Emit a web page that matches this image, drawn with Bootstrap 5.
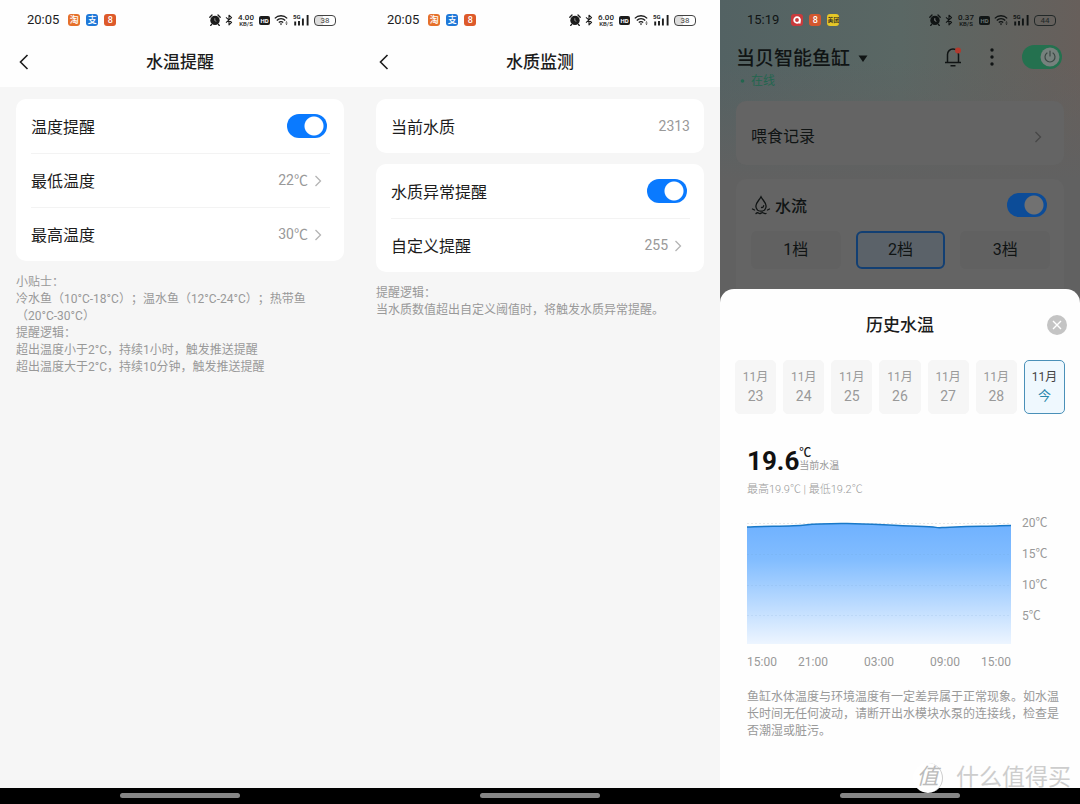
<!DOCTYPE html>
<html lang="zh-CN">
<head>
<meta charset="utf-8">
<meta name="viewport" content="width=device-width, initial-scale=1">
<title>当贝智能鱼缸</title>
<link href="https://cdn.jsdelivr.net/npm/bootstrap@5.3.0/dist/css/bootstrap.min.css" rel="stylesheet">
<style>
  body { font-family: Roboto, "Noto Sans CJK SC", sans-serif; background: #000; color: #1c1c1c; text-spacing-trim: space-all; }
  .phone { background: #f6f6f6; min-height: 100vh; }
  .phone-title { font-size: 17px; line-height: 24px; font-weight: 500; margin: 0; }

  /* status bar */
  .status { height: 40px; padding: 0 24px 0 27px; }
  .apps { gap: 6px; }
  .clock { font-size: 13px; line-height: 16px; margin-right: 3px; }
  .app-dot { width: 12px; height: 12px; border-radius: 3px; font-size: 9px; line-height: 12px; color: #fff; text-align: center; font-weight: 500; overflow: hidden; }
  .rate { font-size: 8px; line-height: 7px; width: 18px; text-align: center; font-weight: 500; }
  .rate small { display: block; font-size: 6px; line-height: 6px; }
  .hd { width: 11px; height: 9px; border-radius: 2px; background: #1c1c1c; color: #fff; font-size: 6px; line-height: 9px; text-align: center; font-weight: 700; }
  .batt { width: 22px; height: 11px; border: 1px solid #444; border-radius: 4px; font-size: 8px; line-height: 9px; text-align: center; color: #444; background: linear-gradient(90deg, #ddd 38%, transparent 38%); }

  /* settings pages */
  .top-bar { background: #fefefe; }
  .nav-row { height: 47px; padding-bottom: 4px; display: grid; grid-template-columns: 48px 1fr 48px; align-items: center; text-align: center; }
  .icon-btn { border: 0; background: none; padding: 0; line-height: 0; color: inherit; }
  .page-body { padding: 12px 16px; }
  .panel { border: 0; border-radius: 10px; background: #fff; padding: 0 14px 0 15px; }
  .panel + .panel { margin-top: 11px; }
  .item { height: 54px; font-size: 16px; color: inherit; text-decoration: none; }
  .item + .item { border-top: 1px solid #f3f3f3; }
  .item-label { padding-top: 3px; }
  .val { font-size: 14px; color: #999; }
  .val svg { color: #b4b4b4; }
  .hint { font-size: 12px; line-height: 17px; color: #999; margin: 13px 0 0; }

  .toggle.form-check-input { width: 40px; height: 24px; margin: 0 3px 0 0; border: 0; border-radius: 12px; float: none;
    background: #0a7aff radial-gradient(circle at 27px 12px, #fff 9px, transparent 10px); flex: none; }

  /* dimmed device page */
  .dimmed { color: #101414; background: linear-gradient(180deg, transparent 60px, #616161 180px), linear-gradient(90deg, #536263 0%, #5a6764 50%, #675f5b 100%); padding-bottom: 14px; }
  .device-row { height: 34px; padding: 0 18px 0 16px; }
  .device-name { font-size: 19px; font-weight: 500; border: 0; background: none; padding: 4px 0 0; color: inherit; line-height: 24px; }
  .online { font-size: 12px; line-height: 14px; padding-left: 20px; margin-bottom: 13px; color: #23664f; }
  .dimmed .panel { margin: 0 16px; background: #646464; }
  .dimmed .panel + .panel { margin-top: 14px; border-radius: 10px 10px 0 0; padding-bottom: 20px; }
  .dimmed .feed { height: 64px; padding-bottom: 0; }
  .dimmed .feed + .panel .item { height: 52px; }
  .feed svg { color: #474747; }
  .dimmed .toggle { background: #0c4c98 radial-gradient(circle at 27px 12px, #717171 9px, transparent 10px); }
  .dimmed .hd { background: #111616; color: #6a7473; }
  .dimmed .batt { background: none; border-color: #222828; color: #222828; }
  .dimmed .clock { margin-right: 6px; }
  .power { width: 40px; height: 24px; border: 0; border-radius: 12px; padding: 0 2px; background: #24714f; line-height: 0; text-align: right; color: #3c4945; }
  .level { display: grid; grid-template-columns: repeat(3, 1fr); gap: 15px; }
  .level button { height: 38px; border: 2px solid transparent; border-radius: 6px; background: #616161; font-size: 16px; line-height: 20px; color: inherit; padding: 0; }
  .level .on { border-color: #123f73; background: #5b6269; }

  /* history sheet */
  .sheet { background: #fefefe; border-radius: 14px 14px 0 0; margin-top: -14px; z-index: 1; }
  .sheet-head { height: 71px; display: grid; grid-template-columns: 48px 1fr 48px; align-items: center; text-align: center; }
  .close-box { padding-right: 13px; }
  .close-x { width: 20px; height: 20px; border-radius: 50%; background: #c4c4c4; border: 0; padding: 0; line-height: 0; color: #fff; }
  .dates { display: grid; grid-template-columns: repeat(7, 1fr); gap: 7px; padding: 0 15px; }
  .dates button { height: 54px; border: 1px solid #f6f6f6; border-radius: 5px; background: #f6f6f6; color: #999; font-size: 12px; line-height: 18px; padding: 0; }
  .dates b { display: block; font-size: 14px; line-height: 20px; font-weight: 400; }
  .dates .on { background: #eff8fe; border-color: #4a90b8; color: #444; }
  .dates .on b { color: #2a87ad; font-size: 13px; }
  .reading { margin-top: 28px; height: 38px; }
  .big-num { font-size: 26px; line-height: 38px; font-weight: 700; color: #111; }
  .unit { font-size: 12px; line-height: 14px; font-weight: 500; }
  .cur { font-size: 10px; line-height: 12px; color: #999; }
  .range { font-size: 11px; line-height: 20px; color: #999; font-weight: 300; }
  .sheet-body { padding: 0 16px 0 27px; }
  .plot { height: 137px; flex: 1 1 0; min-width: 0; }
  .y-axis { width: 42px; margin-left: 11px; font-size: 12px; line-height: 31px; color: #999; }
  .x-axis { display: grid; grid-template-columns: repeat(8, 1fr); margin: 9px 53px 0 0; font-size: 12px; line-height: 17px; color: #999; text-align: center; white-space: nowrap; }
  .x-axis .mid { grid-column: span 2; }
  .x-axis .start { justify-self: start; }
  .x-axis .end { justify-self: end; }
  .sheet .hint { margin-top: 18px; }

  .home-bar { height: 16px; background: #000; padding-top: 5px; }
  .home-bar div { width: 120px; height: 5px; border-radius: 3px; background: #868686; margin: 0 auto; }
  .brand { right: 9px; bottom: 11px; z-index: 2; color: #cdcdcd; font-size: 23px; line-height: 30px; white-space: nowrap; }
  .brand-dot { width: 30px; height: 30px; border-radius: 50%; background: #fff; border-right: 1px solid #ccc; font-size: 22px; line-height: 28px; text-align: center; font-style: italic; color: #bbb; margin-right: 13px; }
</style>
</head>
<body>
<svg class="d-none" xmlns="http://www.w3.org/2000/svg">
  <symbol id="alarm" viewBox="0 0 12 12"><circle cx="6" cy="6.4" r="4.7" fill="currentColor"/><path d="M.8 3.2 3 1M11.2 3.2 9 1M2.6 10.4l-.9 1.1M9.4 10.4l.9 1.1" stroke="currentColor" stroke-width="1.3" stroke-linecap="round"/><path d="M5.800 4.200v2.400l1.500.8" stroke="#fff" stroke-opacity=".6" fill="none" stroke-width=".8"/></symbol>
  <symbol id="bt" viewBox="0 0 8 12"><path d="M1 3.4 6.6 8.3 4 10.8V1.2l2.6 2.5L1 8.6" fill="none" stroke="currentColor" stroke-width="1.1" stroke-linejoin="round"/></symbol>
  <symbol id="wifi" viewBox="0 0 15 12"><path d="M.8 4.4a8.6 8.6 0 0 1 12.4 0M2.8 6.5a5.8 5.8 0 0 1 8.4 0M4.8 8.5a3.1 3.1 0 0 1 4.4 0" fill="none" stroke="currentColor" stroke-width="1.3"/><path d="M5.7 9.6h2.6L7 11.2z" fill="currentColor"/><path d="m11.4 8.6 1.1-1.3 1.1 1.3zM11.4 9.6l1.1 1.3 1.1-1.3z" fill="currentColor"/></symbol>
  <symbol id="cell" viewBox="0 0 17 12"><text x="0" y="5" font-size="6" font-weight="700" fill="currentColor">5G</text><path d="M2.2 11.5v-4M6 11.5V7M9.9 11.5V4.5M14.6 11.5V1" stroke="currentColor" stroke-width="1.9"/></symbol>
  <symbol id="chev" viewBox="0 0 18 14"><path d="m3.500 2 5 5-5 5" fill="none" stroke="currentColor" stroke-width="1.3"/></symbol>
  <symbol id="back" viewBox="0 0 12 18"><path d="M9.500 2 2.500 9l7 7" fill="none" stroke="currentColor" stroke-width="1.6"/></symbol>
</svg>

<main class="container-fluid p-0">
<div class="row g-0">

  <section class="col-12 col-md-4 phone d-flex flex-column">
    <header class="top-bar">
      <div class="status d-flex align-items-center justify-content-between">
        <div class="apps d-flex align-items-center">
          <span class="clock">20:05</span>
          <span class="app-dot" style="background:#e5702a">淘</span>
          <span class="app-dot" style="background:#1f78d8">支</span>
          <span class="app-dot" style="background:#dd5a2a">8</span>
        </div>
        <div class="d-flex align-items-center gap-1">
          <svg width="12" height="12"><use href="#alarm"/></svg>
          <svg width="8" height="12"><use href="#bt"/></svg>
          <span class="rate">4.00<small>KB/S</small></span>
          <span class="hd">HD</span>
          <svg width="15" height="12"><use href="#wifi"/></svg>
          <svg width="17" height="12"><use href="#cell"/></svg>
          <span class="batt">38</span>
        </div>
      </div>
      <div class="nav-row">
        <button class="icon-btn" aria-label="返回"><svg width="12" height="18"><use href="#back"/></svg></button>
        <h1 class="phone-title">水温提醒</h1>
      </div>
    </header>
    <div class="page-body flex-grow-1">
      <div class="panel">
        <div class="item d-flex align-items-center justify-content-between">
          <label class="item-label" for="tempAlert">温度提醒</label>
          <input id="tempAlert" class="form-check-input toggle" type="checkbox" role="switch" checked>
        </div>
        <a href="#" class="item d-flex align-items-center justify-content-between">
          <span class="item-label">最低温度</span>
          <span class="val d-flex align-items-center gap-1">22℃<svg width="18" height="14"><use href="#chev"/></svg></span>
        </a>
        <a href="#" class="item d-flex align-items-center justify-content-between">
          <span class="item-label">最高温度</span>
          <span class="val d-flex align-items-center gap-1">30℃<svg width="18" height="14"><use href="#chev"/></svg></span>
        </a>
      </div>
      <p class="hint">小贴士：<br>冷水鱼（10°C-18°C）；温水鱼（12°C-24°C）；热带鱼<br>（20°C-30°C）<br>提醒逻辑：<br>超出温度小于2°C，持续1小时，触发推送提醒<br>超出温度大于2°C，持续10分钟，触发推送提醒</p>
    </div>
    <footer class="home-bar"><div></div></footer>
  </section>

  <section class="col-12 col-md-4 phone d-flex flex-column">
    <header class="top-bar">
      <div class="status d-flex align-items-center justify-content-between">
        <div class="apps d-flex align-items-center">
          <span class="clock">20:05</span>
          <span class="app-dot" style="background:#e5702a">淘</span>
          <span class="app-dot" style="background:#1f78d8">支</span>
          <span class="app-dot" style="background:#dd5a2a">8</span>
        </div>
        <div class="d-flex align-items-center gap-1">
          <svg width="12" height="12"><use href="#alarm"/></svg>
          <svg width="8" height="12"><use href="#bt"/></svg>
          <span class="rate">6.00<small>KB/S</small></span>
          <span class="hd">HD</span>
          <svg width="15" height="12"><use href="#wifi"/></svg>
          <svg width="17" height="12"><use href="#cell"/></svg>
          <span class="batt">38</span>
        </div>
      </div>
      <div class="nav-row">
        <button class="icon-btn" aria-label="返回"><svg width="12" height="18"><use href="#back"/></svg></button>
        <h1 class="phone-title">水质监测</h1>
      </div>
    </header>
    <div class="page-body flex-grow-1">
      <div class="panel">
        <div class="item d-flex align-items-center justify-content-between">
          <span class="item-label">当前水质</span><span class="val">2313</span>
        </div>
      </div>
      <div class="panel">
        <div class="item d-flex align-items-center justify-content-between">
          <label class="item-label" for="waterAlert">水质异常提醒</label>
          <input id="waterAlert" class="form-check-input toggle" type="checkbox" role="switch" checked>
        </div>
        <a href="#" class="item d-flex align-items-center justify-content-between">
          <span class="item-label">自定义提醒</span>
          <span class="val d-flex align-items-center gap-1">255<svg width="18" height="14"><use href="#chev"/></svg></span>
        </a>
      </div>
      <p class="hint">提醒逻辑：<br>当水质数值超出自定义阈值时，将触发水质异常提醒。</p>
    </div>
    <footer class="home-bar"><div></div></footer>
  </section>

  <section class="col-12 col-md-4 phone d-flex flex-column position-relative">
    <div class="dimmed">
      <div class="status d-flex align-items-center justify-content-between">
        <div class="apps d-flex align-items-center">
          <span class="clock">15:19</span>
          <span class="app-dot" style="background:#c93a3c"><svg width="12" height="12" viewBox="0 0 12 12" class="d-block"><circle cx="6" cy="6" r="2.800" fill="none" stroke="#fff" stroke-width="1.800"/><path d="M8.800 5v4.500" stroke="#fff" stroke-width="1.600"/></svg></span>
          <span class="app-dot" style="background:#d3572e">8</span>
          <span class="app-dot" style="background:#e6c727;color:#222;font-size:6px">美团</span>
        </div>
        <div class="d-flex align-items-center gap-1">
          <svg width="12" height="12"><use href="#alarm"/></svg>
          <svg width="8" height="12"><use href="#bt"/></svg>
          <span class="rate">0.37<small>KB/S</small></span>
          <span class="hd">HD</span>
          <svg width="15" height="12"><use href="#wifi"/></svg>
          <svg width="17" height="12"><use href="#cell"/></svg>
          <span class="batt">44</span>
        </div>
      </div>
      <div class="device-row d-flex align-items-center">
        <button class="device-name d-flex align-items-center gap-2 me-auto">当贝智能鱼缸<svg width="10" height="8" viewBox="0 0 10 8"><path d="M.5.500h9L5 7z" fill="currentColor"/></svg></button>
        <button class="icon-btn" aria-label="消息"><svg width="18" height="22" viewBox="0 0 18 22" fill="none" stroke="currentColor" stroke-width="1.500"><path d="M3.500 16V8.500a5.500 5.500 0 0 1 11 0V16M1 16.500h16M6.500 19.700h5"/><circle cx="14" cy="4.500" r="3" fill="#b03a2e" stroke="none"/></svg></button>
        <button class="icon-btn mx-4" aria-label="更多"><svg width="12" height="20" viewBox="0 0 12 20" fill="currentColor"><circle cx="6" cy="3" r="1.700"/><circle cx="6" cy="10" r="1.700"/><circle cx="6" cy="17" r="1.700"/></svg></button>
        <button class="power" aria-label="电源"><svg width="20" height="20" viewBox="0 0 20 20"><circle cx="10" cy="10" r="9.500" fill="#76817d"/><path d="M7 6a5 5 0 1 0 6 0M10 4v5" fill="none" stroke="currentColor" stroke-width="1.200" stroke-linecap="round"/></svg></button>
      </div>
      <div class="online d-flex align-items-center gap-1"><svg width="7" height="4" viewBox="0 0 7 4"><circle cx="2.500" cy="2" r="1.800" fill="currentColor"/></svg>在线</div>
      <div class="panel feed">
        <a href="#" class="item h-100 d-flex align-items-center justify-content-between"><span class="pt-2">喂食记录</span><svg width="18" height="14" class="mt-2"><use href="#chev"/></svg></a>
      </div>
      <div class="panel">
        <div class="item d-flex align-items-center">
          <svg width="20" height="20" viewBox="0 0 20 20" fill="none" stroke="currentColor" stroke-width="1.300" class="me-1" stroke-linecap="round"><path d="M6.300 14.700A5.200 5.200 0 0 1 4.900 11C4.900 7.500 8.500 5 10 1.700c1.500 3.300 5.100 5.800 5.100 9.300a5.200 5.200 0 0 1-1.400 3.700M10.500 12.500q2 0 2.200-1.800M1.500 14l2 1M18.500 14l-2 1M5 18.500q1.300-1.300 2.500-.4t2.500 0 2.500 0 2.500.4M7 15.500q3 1.200 6 0"/></svg>
          <label for="flow" class="item-label me-auto fw-medium">水流</label>
          <input id="flow" class="form-check-input toggle" type="checkbox" role="switch" checked>
        </div>
        <div class="level">
          <button>1档</button><button class="on">2档</button><button>3档</button>
        </div>
      </div>
    </div>

    <div class="sheet flex-grow-1">
      <div class="sheet-head">
        <span></span>
        <h2 class="phone-title">历史水温</h2>
        <div class="close-box d-flex justify-content-end"><button class="close-x" aria-label="关闭"><svg width="20" height="20" viewBox="0 0 20 20"><path d="m6 6 8 8m0-8-8 8" stroke="currentColor" stroke-width="1.400"/></svg></button></div>
      </div>
      <div class="dates">
        <button>11月<b>23</b></button><button>11月<b>24</b></button><button>11月<b>25</b></button><button>11月<b>26</b></button><button>11月<b>27</b></button><button>11月<b>28</b></button><button class="on">11月<b>今</b></button>
      </div>
      <div class="sheet-body">
        <div class="reading d-flex">
          <span class="big-num">19.6</span>
          <div class="pt-1"><div class="unit">℃</div><div class="cur">当前水温</div></div>
        </div>
        <div class="range">最高19.9℃ | 最低19.2℃</div>
        <div class="d-flex mt-2">
          <svg class="plot" viewBox="0 0 264 137" preserveAspectRatio="none">
            <defs><linearGradient id="water" x1="0" y1="0" x2="0" y2="1"><stop offset="0" stop-color="#6fb1ff"/><stop offset=".3" stop-color="#82bdff"/><stop offset="1" stop-color="#edf5ff"/></linearGradient></defs>
            <path d="M0 15.500H264" stroke="#e8e8e8" stroke-dasharray="2 2"/>
            <path d="M0 19C20 18 45 18.500 58 17S75 15.300 100 15.500 145 17.800 170 18.200 185 20 195 19.600 215 18.300 235 18.300 250 17.500 264 17.500V136H0Z" fill="url(#water)"/>
            <path d="M0 19C20 18 45 18.500 58 17S75 15.300 100 15.500 145 17.800 170 18.200 185 20 195 19.600 215 18.300 235 18.300 250 17.500 264 17.500" fill="none" stroke="#1878c8" stroke-width="1.500"/>
            <path d="M0 46.500H264M0 77.500H264M0 107.500H264" stroke="#6090c0" stroke-opacity=".12" stroke-dasharray="2 2"/>
          </svg>
          <div class="y-axis"><div>20℃</div><div>15℃</div><div>10℃</div><div>5℃</div></div>
        </div>
        <div class="x-axis"><span class="start">15:00</span><span class="mid">21:00</span><span class="mid">03:00</span><span class="mid">09:00</span><span class="end">15:00</span></div>
        <p class="hint">鱼缸水体温度与环境温度有一定差异属于正常现象。如水温长时间无任何波动，请断开出水模块水泵的连接线，检查是否潮湿或脏污。</p>
      </div>
    </div>
    <footer class="home-bar"><div></div></footer>
    <div class="brand position-absolute d-flex"><span class="brand-dot">值</span>什么值得买</div>
  </section>

</div>
</main>
<script src="https://cdn.jsdelivr.net/npm/bootstrap@5.3.0/dist/js/bootstrap.bundle.min.js"></script>
</body>
</html>
